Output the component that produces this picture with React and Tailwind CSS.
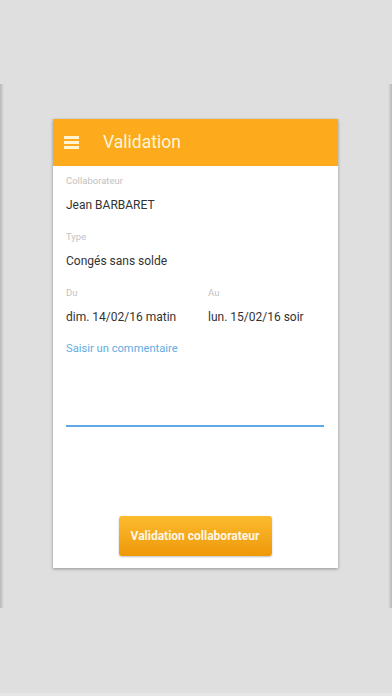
export default function App() {
  return (
    <div className="w-[392px] h-[696px] bg-[#dfdfdf] flex flex-col font-['Roboto',sans-serif] overflow-hidden">
      <div className="h-[84px] shrink-0" />
      <div className="h-[524px] shrink-0 flex">
        <div className="w-[4px] h-full bg-gradient-to-r from-[#b8b8b8] to-[#dfdfdf]" />
        <div className="flex-1 flex">
          <div className="ml-[49px] mt-[35px] w-[285px] h-[449px] bg-white flex flex-col shadow-[0_1px_3px_rgba(0,0,0,0.35)]">
            <div className="h-[47px] bg-[#fdab1c] flex items-center shrink-0">
              <div className="ml-[11px] w-[15px] flex flex-col gap-[2.5px]">
                <div className="h-[2.5px] bg-[#fff3d0]" />
                <div className="h-[2.5px] bg-[#fff3d0]" />
                <div className="h-[2.5px] bg-[#fff3d0]" />
              </div>
              <div className="ml-[24px] text-[17.5px] text-[#fff5d8] leading-none">Validation</div>
            </div>
            <div className="flex flex-col pl-[13px] pr-[14px] pt-[8px] flex-1">
              <div className="text-[9.5px] leading-[14px] text-[#c2c2c2]">Collaborateur</div>
              <div className="mt-[8px] text-[12px] leading-[18px] text-[#333]">Jean BARBARET</div>
              <div className="mt-[16px] text-[9.5px] leading-[14px] text-[#c2c2c2]">Type</div>
              <div className="mt-[8px] text-[12px] leading-[18px] text-[#333]">Congés sans solde</div>
              <div className="mt-[16px] flex">
                <div className="w-[142px] flex flex-col">
                  <div className="text-[9.5px] leading-[14px] text-[#c2c2c2]">Du</div>
                  <div className="mt-[8px] text-[12px] leading-[18px] text-[#333]">dim. 14/02/16 matin</div>
                </div>
                <div className="flex flex-col">
                  <div className="text-[9.5px] leading-[14px] text-[#c2c2c2]">Au</div>
                  <div className="mt-[8px] text-[12px] leading-[18px] text-[#333]">lun. 15/02/16 soir</div>
                </div>
              </div>
              <div className="mt-[15px] text-[11.2px] leading-[16px] text-[#62ade2]">Saisir un commentaire</div>
              <div className="h-[70px] border-b-2 border-[#5fa8e4]" />
              <div className="flex-1 flex items-end justify-center pb-[12px]">
                <div className="w-[153px] h-[40px] rounded-[3px] bg-gradient-to-b from-[#fcbb2c] to-[#ee9805] flex items-center justify-center shadow-[0_1px_2px_rgba(0,0,0,0.25)]">
                  <span className="text-[12px] font-bold text-[#fff7e6]">Validation collaborateur</span>
                </div>
              </div>
            </div>
          </div>
        </div>
        <div className="w-[4px] h-full bg-gradient-to-l from-[#b8b8b8] to-[#dfdfdf]" />
      </div>
      <div className="flex-1" />
      <div className="h-[3px] bg-[#e6e6e6] shrink-0" />
    </div>
  );
}
